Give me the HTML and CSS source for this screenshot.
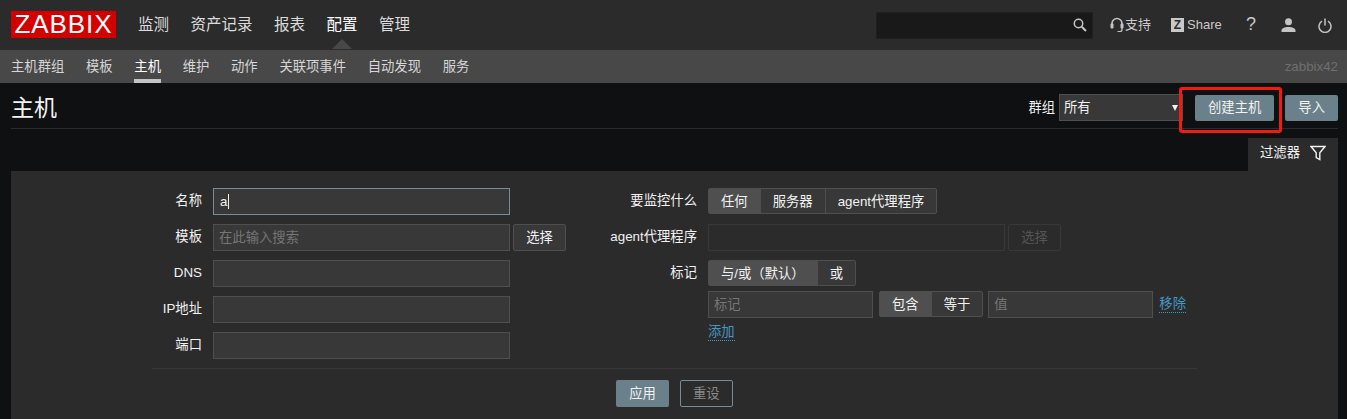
FILE: index.html
```html
<!DOCTYPE html>
<html lang="zh-CN">
<head>
<meta charset="utf-8">
<title>主机</title>
<link rel="stylesheet" href="styles.css">
</head>
<body>
<header class="topnav">
  <div class="logo">ZABBIX</div>
  <nav class="mainmenu">
    <a>监测</a><a>资产记录</a><a>报表</a><a class="active">配置</a><a>管理</a>
  </nav>
  <div class="tools">
    <div class="search">
      <svg class="search-icon" width="14" height="14" viewBox="0 0 14 14"><circle cx="5.500" cy="5.500" r="4.200" fill="none" stroke="#c4c4c4" stroke-width="1.500"/><path d="M8.700 8.700L13 13" stroke="#c4c4c4" stroke-width="2"/></svg>
    </div>
    <a class="tool support">
      <svg width="14" height="16" viewBox="0 0 14 16"><path d="M2 10V6.500a5 5 0 0 1 10 0V10" fill="none" stroke="#c4c4c4" stroke-width="1.600"/><rect x="0.500" y="6.500" width="3" height="5" rx="1" fill="#c4c4c4"/><rect x="10.500" y="6.500" width="3" height="5" rx="1" fill="#c4c4c4"/><path d="M12 11v1.500a2 2 0 0 1-2 2H7.500" fill="none" stroke="#c4c4c4" stroke-width="1.200"/></svg>
      <span>支持</span>
    </a>
    <a class="tool share"><span class="zbox">Z</span><span>Share</span></a>
    <a class="tool help">?</a>
    <a class="tool user">
      <svg width="15" height="14" viewBox="0 0 15 14"><circle cx="7.500" cy="3.800" r="3.500" fill="#c4c4c4"/><path d="M0.500 14v-1.500c0-2 3-3.500 7-3.500s7 1.500 7 3.500V14z" fill="#c4c4c4"/></svg>
    </a>
    <a class="tool power">
      <svg width="14" height="15" viewBox="0 0 14 15"><path d="M4 3.200a6 6 0 1 0 6 0" fill="none" stroke="#c4c4c4" stroke-width="1.500"/><path d="M7 0.500V7.500" stroke="#c4c4c4" stroke-width="1.500"/></svg>
    </a>
  </div>
</header>
<nav class="subnav">
  <a>主机群组</a><a>模板</a><a class="active">主机</a><a>维护</a><a>动作</a><a>关联项事件</a><a>自动发现</a><a>服务</a>
  <span class="server">zabbix42</span>
</nav>
<main class="content">
  <div class="pagehead">
    <h1>主机</h1>
    <div class="head-controls">
      <span class="group-label">群组</span>
      <div class="select"><span>所有</span><i class="arrow"></i></div>
      <button class="btn create">创建主机</button>
      <button class="btn">导入</button>
    </div>
    <div class="highlight"></div>
  </div>
  <div class="tabbar">
    <div class="filter-tab">
      <span>过滤器</span>
      <svg width="16" height="16" viewBox="0 0 16 16"><path d="M1 1.500H15L9.800 7.800V14.500L6.200 12.500V7.800z" fill="none" stroke="#f2f2f2" stroke-width="1.400"/></svg>
    </div>
  </div>
  <section class="filter">
    <div class="cols">
      <div class="col left">
        <label>名称</label>
        <div class="ctl"><div class="field focus w297">a<i class="caret"></i></div></div>
        <label>模板</label>
        <div class="ctl"><input class="field w297" placeholder="在此输入搜索"><button class="ghost">选择</button></div>
        <label>DNS</label>
        <div class="ctl"><input class="field w297"></div>
        <label>IP地址</label>
        <div class="ctl"><input class="field w297"></div>
        <label>端口</label>
        <div class="ctl"><input class="field w297"></div>
      </div>
      <div class="col right">
        <label>要监控什么</label>
        <div class="ctl"><div class="radios"><a class="on">任何</a><a>服务器</a><a>agent代理程序</a></div></div>
        <label>agent代理程序</label>
        <div class="ctl"><input class="field disabled w297" disabled><button class="ghost disabled" disabled>选择</button></div>
        <label>标记</label>
        <div class="ctl stack">
          <div class="radios"><a class="on">与/或（默认）</a><a>或</a></div>
          <div class="tagrow">
            <input class="field w165" placeholder="标记">
            <div class="radios"><a class="on">包含</a><a>等于</a></div>
            <input class="field w165" placeholder="值">
            <a class="link">移除</a>
          </div>
          <a class="link add">添加</a>
        </div>
      </div>
    </div>
    <div class="actions">
      <button class="btn apply">应用</button>
      <button class="outline">重设</button>
    </div>
  </section>
</main>
</body>
</html>
```
FILE: styles.css
```css
* { box-sizing: border-box; }
html, body { margin: 0; height: 419px; overflow: hidden; }
body {
  background: #0e1012;
  color: #f2f2f2;
  font: 13.33px/1.2 Arial, "Liberation Sans", "Noto Sans CJK SC", sans-serif;
}
a { cursor: pointer; }

.topnav {
  height: 50px;
  background: #2b2b2b;
  display: flex;
  align-items: center;
  padding: 0 15px 0 11px;
}
.logo {
  width: 105px;
  height: 27px;
  margin-top: -1px;
  background: #d40000;
  color: #fff;
  font-size: 26px;
  line-height: 27px;
  letter-spacing: 0.9px;
  text-align: center;
}
.mainmenu { display: flex; gap: 21.5px; margin-left: 22px; font-size: 15.5px; color: #dcdcdc; }
.mainmenu .active { color: #fff; position: relative; }
.mainmenu .active::after {
  content: "";
  position: absolute;
  left: 5px;
  bottom: -15px;
  border: 10px solid transparent;
  border-top: 0;
  border-bottom-color: #484848;
}
.tools { margin-left: auto; display: flex; align-items: center; color: #c9c9c9; }
.search {
  width: 217px;
  height: 27px;
  background: #191919;
  border: 1px solid #202020;
  display: flex;
  align-items: center;
  justify-content: flex-end;
  padding-right: 5px;
  margin-right: 17px;
}
.tool { display: flex; align-items: center; gap: 3px; font-size: 13px; color: #c9c9c9; }
.support { width: 61px; gap: 1px; }
.share { width: 75px; }
.zbox {
  width: 13px; height: 14px;
  background: #c9c9c9;
  color: #2b2b2b;
  font-size: 12px;
  font-weight: bold;
  line-height: 14px;
  text-align: center;
}
.help { font-size: 18px; width: 35px; }
.user { width: 37px; }
.power { width: 14px; }

.subnav {
  height: 33px;
  background: #484848;
  display: flex;
  align-items: flex-start;
  gap: 21.7px;
  padding: 8px 9px 0 11px;
  color: #d6d6d6;
}
.subnav a { height: 25px; line-height: 17px; }
.subnav .active { color: #fff; border-bottom: 4px solid #c4c4c4; }
.server { margin-left: auto; color: #6f6f6f; line-height: 17px; }

.pagehead {
  margin: 0 9px 0 11px;
  height: 46px;
  border-bottom: 1px solid #2b2b2b;
  display: flex;
  align-items: center;
  justify-content: space-between;
  position: relative;
}
h1 { margin: 6px 0 0; font-size: 23px; font-weight: normal; color: #f2f2f2; }
.head-controls { display: flex; align-items: center; margin-top: 4px; }
.group-label { margin-right: 4px; }
.select {
  width: 124px;
  height: 27px;
  background: #383838;
  border: 1px solid #4f4f4f;
  display: flex;
  align-items: center;
  justify-content: space-between;
  padding: 0 4px;
}
.arrow {
  border: 3.5px solid transparent;
  border-top: 6px solid #f2f2f2;
  border-bottom: 0;
}
.btn {
  height: 26px;
  border: 0;
  border-radius: 2px;
  background: #6a808b;
  color: #f2f2f2;
  font: inherit;
  padding: 0 13px;
  margin-left: 11px;
}
.create { margin-left: 12px; }
.highlight {
  position: absolute;
  left: 1168px;
  top: 4px;
  width: 103px;
  height: 46px;
  border: 3px solid #f01c10;
  border-radius: 3px;
}

.tabbar { display: flex; justify-content: flex-end; margin: 9px 9px 0 11px; }
.filter-tab {
  width: 90px;
  height: 33px;
  background: #2b2b2b;
  display: flex;
  align-items: center;
  gap: 10px;
  padding-left: 12px;
  padding-bottom: 4px;
}

.filter {
  margin: 0 9px 0 11px;
  height: 260px;
  background: #2b2b2b;
  padding-top: 17px;
}
.cols { display: flex; }
.col { display: grid; row-gap: 9px; column-gap: 11px; align-content: start; grid-auto-rows: min-content; }
.left { width: 579px; grid-template-columns: 191px 1fr; }
.right { grid-template-columns: 107px 1fr; }
.col label { text-align: right; line-height: 16px; padding-top: 5px; color: #f2f2f2; }
.ctl { display: flex; gap: 3px; min-height: 27px; }
.stack { flex-direction: column; gap: 5px; }
.field {
  height: 27px;
  background: #383838;
  border: 1px solid #4f4f4f;
  color: #f2f2f2;
  font: inherit;
  padding: 0 5px;
  line-height: 25px;
  display: block;
  outline: 0;
}
.field::placeholder { color: #767676; opacity: 1; }
.w297 { width: 297px; }
.w165 { width: 165px; }
.focus { border-color: #768d99; display: flex; align-items: center; padding-left: 6px; }
.caret { width: 1px; height: 15px; background: #f2f2f2; margin-left: 1px; }
.field.disabled { background: #2b2b2b; border-color: #383838; }
.ghost {
  width: 53px;
  height: 27px;
  background: #383838;
  border: 1px solid #4f4f4f;
  border-radius: 2px;
  color: #f2f2f2;
  font: inherit;
  padding: 0;
}
.ghost.disabled { background: #2b2b2b; border-color: #383838; color: #555; }
.radios {
  display: inline-flex;
  align-self: flex-start;
  height: 26px;
  border: 1px solid #4f4f4f;
  border-radius: 2px;
  background: #383838;
  line-height: 25px;
}
.radios a { padding: 0 12px; border-left: 1px solid #4f4f4f; }
.radios a:first-child { border-left: 0; }
.radios .on { background: #4f4f4f; }
.tagrow { display: flex; gap: 5px; align-items: flex-start; }
.tagrow .radios { margin-left: 1px; }
.link {
  color: #4796c4;
  border-bottom: 1px dotted #4796c4;
  line-height: 17px;
  align-self: flex-start;
}
.tagrow .link { margin: 4px 0 0 1px; }
.add { margin-top: 0; }
.actions {
  margin: 9px 141px 0;
  border-top: 1px solid #383838;
  padding-top: 11px;
  display: flex;
  justify-content: center;
  gap: 11px;
}
.apply { margin: 0; height: 27px; }
.outline {
  height: 27px;
  width: 53px;
  background: transparent;
  border: 1px solid #768d99;
  border-radius: 2px;
  color: #8a8a8a;
  font: inherit;
  padding: 0;
}
```
